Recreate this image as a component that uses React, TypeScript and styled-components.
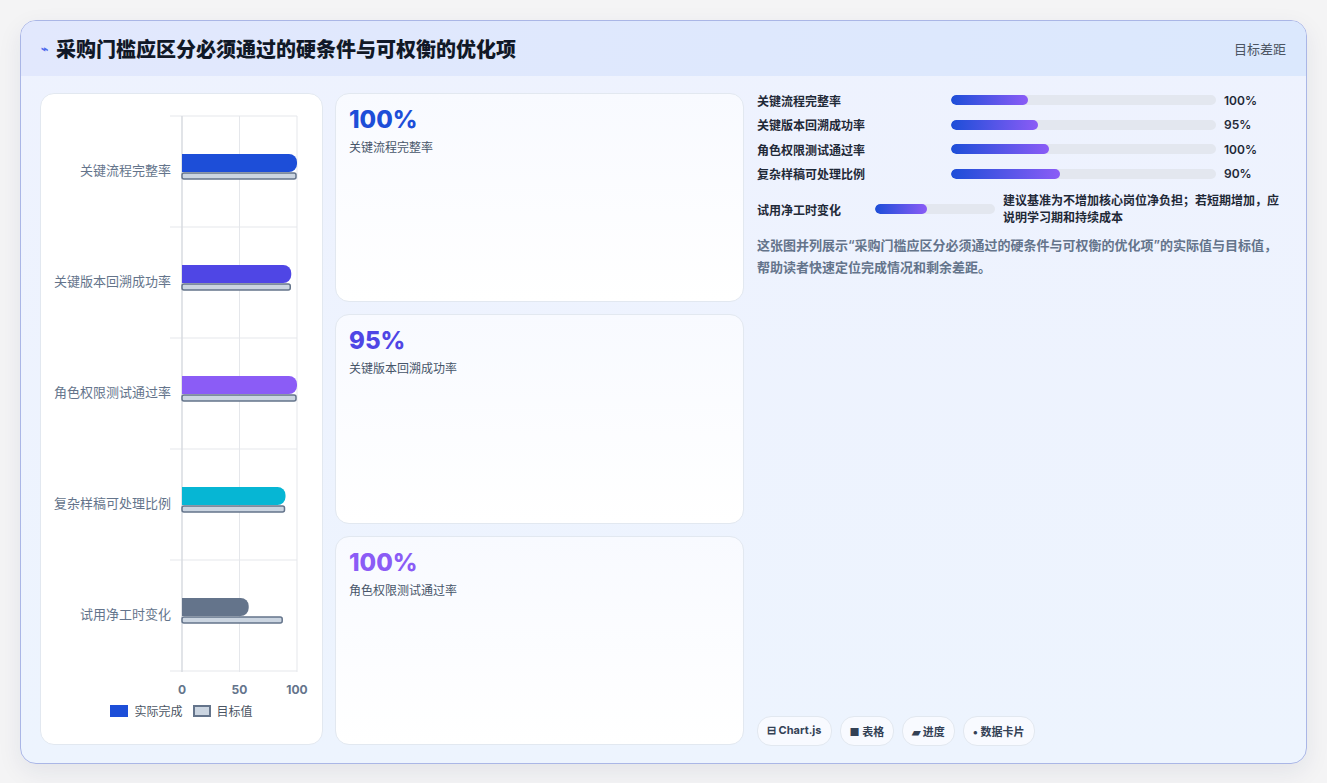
import React from "react";
import styled, { createGlobalStyle } from "styled-components";

const Global = createGlobalStyle`
  body { margin: 0; background: #f4f4f5; font-family: Inter, "Noto Sans CJK SC", sans-serif; }
`;
const Page = styled.div`
  padding: 20px 20px 19px 20px; height: 783px; box-sizing: border-box;
`;
const Card = styled.div`
  height: 744px; box-sizing: border-box; border: 1px solid #aab6e6; border-radius: 16px;
  background: linear-gradient(180deg, #eef2fe, #edf4fe); overflow: hidden;
  box-shadow: 0 8px 24px rgba(30,40,90,0.08); display: flex; flex-direction: column;
`;
const Header = styled.div`
  height: 55px; display: flex; align-items: center; justify-content: space-between;
  padding: 0 20px; background: linear-gradient(90deg, #e2e8fd, #dbe8fd);
`;
const Title = styled.h1`
  margin: 0; font-size: 20px; font-weight: 800; color: #111827; display: flex; align-items: center; gap: 8px;
`;
const Hint = styled.span` font-size: 13px; color: #4b5563; `;
const Body = styled.div`
  flex: 1; display: grid; grid-template-columns: 283px 407px 1fr; gap: 14px; padding: 17px 16px 18px 19px;
`;
const Panel = styled.div`
  background: #fff; border: 1px solid #e2e8f0; border-radius: 14px; box-sizing: border-box;
`;
const ChartPanel = styled(Panel)` display: flex; flex-direction: column; align-items: center; padding-bottom: 14px; `;
const Legend = styled.div` display: flex; gap: 10px; font-size: 12px; color: #4b5563; align-items: center; `;
const LegItem = styled.span` display: flex; align-items: center; gap: 6px; `;
const Swatch = styled.span<{ $fill: string; $bd: string }>`
  width: 18px; height: 12px; background: ${p => p.$fill}; border: 2px solid ${p => p.$bd}; box-sizing: border-box;
`;
const Mid = styled.div` display: flex; flex-direction: column; gap: 12px; margin-left: -2px; `;
const Stat = styled(Panel)`
  flex: 1; padding: 12px 13px; background: linear-gradient(180deg, #f8faff, #ffffff);
`;
const Big = styled.div<{ $c: string }>` font-size: 24px; font-weight: 800; color: ${p => p.$c}; line-height: 28px; `;
const Small = styled.div` font-size: 12px; color: #475569; margin-top: 4px; `;
const Right = styled.div` display: flex; flex-direction: column; margin-top: -5px; margin-left: -1px; `;
const Row = styled.div`
  display: grid; grid-template-columns: 186px 265px 1fr; gap: 8px; align-items: center; height: 24.5px;
  font-size: 12px; font-weight: 600; color: #1f2937;
`;
const Track = styled.div<{ $w?: number }>`
  height: 10px; background: #e3e7ef; border-radius: 5px; overflow: hidden;
  ${p => p.$w ? `width:${p.$w}px;` : ""}
`;
const Fill = styled.div` height: 100%; border-radius: 5px; background: linear-gradient(90deg, #1d4ed8, #8b5cf6); `;
const Row5 = styled.div`
  display: grid; grid-template-columns: 110px 120px 1fr; gap: 8px; align-items: center; margin-top: 6px;
  font-size: 12px; font-weight: 600; color: #1f2937;
`;
const Note = styled.div` line-height: 17px; `;
const Desc = styled.p` margin: 8px 0 0; font-size: 13px; line-height: 22px; color: #64748b; font-weight: 600; `;
const Chips = styled.div` margin-top: auto; display: flex; gap: 8px; margin-bottom: -1px; `;
const Chip = styled.span`
  font-size: 11px; font-weight: 700; color: #334155; background: #f8faff; border: 1px solid #e2e8f0;
  border-radius: 14px; padding: 6px 9px;
`;

const cats = [
  { n: "关键流程完整率", a: 100, t: 100, c: "#1d4ed8" },
  { n: "关键版本回溯成功率", a: 95, t: 95, c: "#4f46e5" },
  { n: "角色权限测试通过率", a: 100, t: 100, c: "#8b5cf6" },
  { n: "复杂样稿可处理比例", a: 90, t: 90, c: "#06b6d4" },
  { n: "试用净工时变化", a: 58, t: 88, c: "#64748b" },
];

function Chart() {
  const x0 = 141, s = 1.15, top = 22, step = 111;
  return (
    <svg width="281" height="608">
      {[0, 50, 100].map(v => (
        <line key={v} x1={x0 + v * s} x2={x0 + v * s} y1={top} y2={578} stroke="#e5e7eb" />
      ))}
      {[0, 1, 2, 3, 4, 5].map(i => (
        <line key={i} x1={x0 - 12} x2={x0 + 115} y1={top + i * step} y2={top + i * step} stroke="#e5e7eb" />
      ))}
      <line x1={x0} x2={x0} y1={top} y2={578} stroke="#d1d5db" />
      {cats.map((c, i) => {
        const cy = top + step * i + 55;
        return (
          <g key={c.n}>
            <text x={x0 - 11} y={cy + 4} textAnchor="end" fontSize="13" fill="#64748b">{c.n}</text>
            <path d={`M${x0} ${cy - 17} h${c.a * s - 8} a8 8 0 0 1 8 8 v2 a8 8 0 0 1 -8 8 h-${c.a * s - 8} z`} fill={c.c} />
            <rect x={x0} y={cy + 2} width={c.t * s - 1} height={6} rx={2} fill="#cbd5e1" stroke="#64748b" strokeWidth="1.5" />
          </g>
        );
      })}
      {[0, 50, 100].map(v => (
        <text key={v} x={x0 + v * s} y={600} textAnchor="middle" fontSize="12" fontWeight="700" fill="#64748b">{v}</text>
      ))}
    </svg>
  );
}

const rows = [
  ["关键流程完整率", 77, "100%"],
  ["关键版本回溯成功率", 87, "95%"],
  ["角色权限测试通过率", 98, "100%"],
  ["复杂样稿可处理比例", 109, "90%"],
] as const;

export default function App() {
  return (
    <Page>
      <Global />
      <Card>
        <Header>
          <Title><span style={{ color: "#4f6bed", fontSize: 12 }}>⌁</span>采购门槛应区分必须通过的硬条件与可权衡的优化项</Title>
          <Hint>目标差距</Hint>
        </Header>
        <Body>
          <ChartPanel>
            <Chart />
            <Legend>
              <LegItem><Swatch $fill="#1d4ed8" $bd="#1d4ed8" />实际完成</LegItem>
              <LegItem><Swatch $fill="#cbd5e1" $bd="#64748b" />目标值</LegItem>
            </Legend>
          </ChartPanel>
          <Mid>
            <Stat><Big $c="#1d4ed8">100%</Big><Small>关键流程完整率</Small></Stat>
            <Stat><Big $c="#4f46e5">95%</Big><Small>关键版本回溯成功率</Small></Stat>
            <Stat><Big $c="#8b5cf6">100%</Big><Small>角色权限测试通过率</Small></Stat>
          </Mid>
          <Right>
            {rows.map(([n, w, v]) => (
              <Row key={n}><span>{n}</span><Track><Fill style={{ width: w }} /></Track><span>{v}</span></Row>
            ))}
            <Row5>
              <span>试用净工时变化</span>
              <Track $w={120}><Fill style={{ width: 52 }} /></Track>
              <Note>建议基准为不增加核心岗位净负担；若短期增加，应说明学习期和持续成本</Note>
            </Row5>
            <Desc>这张图并列展示“采购门槛应区分必须通过的硬条件与可权衡的优化项”的实际值与目标值，帮助读者快速定位完成情况和剩余差距。</Desc>
            <Chips>
              <Chip>⊟ Chart.js</Chip><Chip>■ 表格</Chip><Chip>▰ 进度</Chip><Chip>• 数据卡片</Chip>
            </Chips>
          </Right>
        </Body>
      </Card>
    </Page>
  );
}
